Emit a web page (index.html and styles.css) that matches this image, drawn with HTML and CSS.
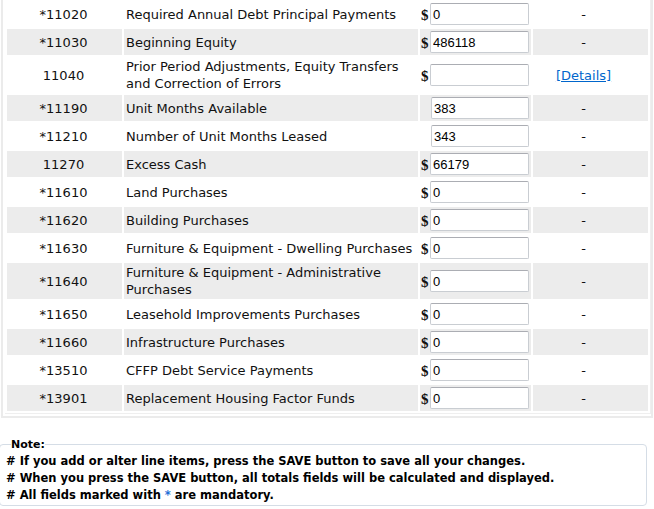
FILE: index.html
```html
<!DOCTYPE html>
<html lang="en">
<head>
    <meta charset="UTF-8">
    <title>Statement Line Items</title>
    <link rel="stylesheet" href="styles.css">
</head>
<body>
    <div class="grid-panel">
        <table class="line-items">
            <colgroup>
                <col class="c-code">
                <col class="c-desc">
                <col class="c-amt">
                <col class="c-info">
            </colgroup>
            <tbody>
                <tr>
                    <td class="code">*11020</td>
                    <td class="desc">Required Annual Debt Principal Payments</td>
                    <td class="amt"><div class="amt-box"><span class="cur">$</span><input type="text" value="0"></div></td>
                    <td class="info">-</td>
                </tr>
                <tr>
                    <td class="code">*11030</td>
                    <td class="desc">Beginning Equity</td>
                    <td class="amt"><div class="amt-box"><span class="cur">$</span><input type="text" value="486118"></div></td>
                    <td class="info">-</td>
                </tr>
                <tr>
                    <td class="code">11040</td>
                    <td class="desc">Prior Period Adjustments, Equity Transfers and Correction of Errors</td>
                    <td class="amt"><div class="amt-box"><span class="cur">$</span><input type="text" value=""></div></td>
                    <td class="info"><a href="#">[Details]</a></td>
                </tr>
                <tr>
                    <td class="code">*11190</td>
                    <td class="desc">Unit Months Available</td>
                    <td class="amt"><div class="amt-box plain"><input type="text" value="383"></div></td>
                    <td class="info">-</td>
                </tr>
                <tr>
                    <td class="code">*11210</td>
                    <td class="desc">Number of Unit Months Leased</td>
                    <td class="amt"><div class="amt-box plain"><input type="text" value="343"></div></td>
                    <td class="info">-</td>
                </tr>
                <tr>
                    <td class="code">11270</td>
                    <td class="desc">Excess Cash</td>
                    <td class="amt"><div class="amt-box"><span class="cur">$</span><input type="text" value="66179"></div></td>
                    <td class="info">-</td>
                </tr>
                <tr>
                    <td class="code">*11610</td>
                    <td class="desc">Land Purchases</td>
                    <td class="amt"><div class="amt-box"><span class="cur">$</span><input type="text" value="0"></div></td>
                    <td class="info">-</td>
                </tr>
                <tr>
                    <td class="code">*11620</td>
                    <td class="desc">Building Purchases</td>
                    <td class="amt"><div class="amt-box"><span class="cur">$</span><input type="text" value="0"></div></td>
                    <td class="info">-</td>
                </tr>
                <tr>
                    <td class="code">*11630</td>
                    <td class="desc">Furniture &amp; Equipment - Dwelling Purchases</td>
                    <td class="amt"><div class="amt-box"><span class="cur">$</span><input type="text" value="0"></div></td>
                    <td class="info">-</td>
                </tr>
                <tr>
                    <td class="code">*11640</td>
                    <td class="desc">Furniture &amp; Equipment - Administrative Purchases</td>
                    <td class="amt"><div class="amt-box"><span class="cur">$</span><input type="text" value="0"></div></td>
                    <td class="info">-</td>
                </tr>
                <tr>
                    <td class="code">*11650</td>
                    <td class="desc">Leasehold Improvements Purchases</td>
                    <td class="amt"><div class="amt-box"><span class="cur">$</span><input type="text" value="0"></div></td>
                    <td class="info">-</td>
                </tr>
                <tr>
                    <td class="code">*11660</td>
                    <td class="desc">Infrastructure Purchases</td>
                    <td class="amt"><div class="amt-box"><span class="cur">$</span><input type="text" value="0"></div></td>
                    <td class="info">-</td>
                </tr>
                <tr>
                    <td class="code">*13510</td>
                    <td class="desc">CFFP Debt Service Payments</td>
                    <td class="amt"><div class="amt-box"><span class="cur">$</span><input type="text" value="0"></div></td>
                    <td class="info">-</td>
                </tr>
                <tr>
                    <td class="code">*13901</td>
                    <td class="desc">Replacement Housing Factor Funds</td>
                    <td class="amt"><div class="amt-box"><span class="cur">$</span><input type="text" value="0"></div></td>
                    <td class="info">-</td>
                </tr>
            </tbody>
        </table>
    </div>

    <fieldset class="note">
        <legend>Note:</legend>
        <p># If you add or alter line items, press the SAVE button to save all your changes.</p>
        <p># When you press the SAVE button, all totals fields will be calculated and displayed.</p>
        <p># All fields marked with <span class="req">*</span> are mandatory.</p>
    </fieldset>
</body>
</html>
```

FILE: styles.css
```css
* { box-sizing: border-box; }

body {
    margin: 0;
    background: #fff;
    color: #111;
    font-family: "DejaVu Sans", Verdana, sans-serif;
    font-size: 13px;
}

.grid-panel {
    width: 652px;
    margin: -1px 0 0 1px;
    padding: 0 0 2px 2px;
    border: 2px solid #ebebeb;
    border-top: none;
}

.line-items {
    width: 646px;
    table-layout: fixed;
    border-collapse: separate;
    border-spacing: 2px;
    border-right: 1px solid #efefef;
    border-bottom: 1px solid #efefef;
}

.c-code { width: 115px; }
.c-desc { width: 294px; }
.c-amt { width: 111px; }

.line-items td {
    height: 26px;
    padding: 1px 2px;
    line-height: 17px;
    vertical-align: middle;
}

.line-items tr:nth-child(even) td { background: #ececec; }

td.code { text-align: center; padding-right: 4px; }

td.amt { padding: 1px; }

td.info {
    text-align: center;
    padding-right: 16px;
}

td.info a {
    color: #0066cc;
    text-decoration: underline;
}

.amt-box {
    display: flex;
    align-items: center;
}

.amt-box.plain { padding-left: 10px; }

.cur {
    width: 9px;
    padding-top: 3px;
    font-family: "Liberation Serif", serif;
    font-weight: bold;
    font-size: 15px;
    line-height: 15px;
}

.amt-box input {
    width: 99px;
    height: 22px;
    margin: 0;
    padding: 0 2px;
    border: 1px solid #c9cdd2;
    border-top-color: #abadb3;
    border-radius: 2px;
    font-family: "Liberation Sans", Arial, sans-serif;
    font-size: 13px;
    color: #000;
    background: #fff;
}

.amt-box.plain input { width: 98px; }

.note {
    width: 648px;
    margin: 20px 0 0 -1px;
    padding: 2px 4px 1px 6px;
    border: 1px solid #d5dde6;
    border-radius: 4px;
    font-size: 11.5px;
    font-weight: bold;
    color: #000;
}

.note legend {
    margin-left: 5px;
    padding: 0;
    font-size: 11px;
}

.note p {
    margin: 0;
    line-height: 17px;
}

.req { color: #1f6fd6; }
```
